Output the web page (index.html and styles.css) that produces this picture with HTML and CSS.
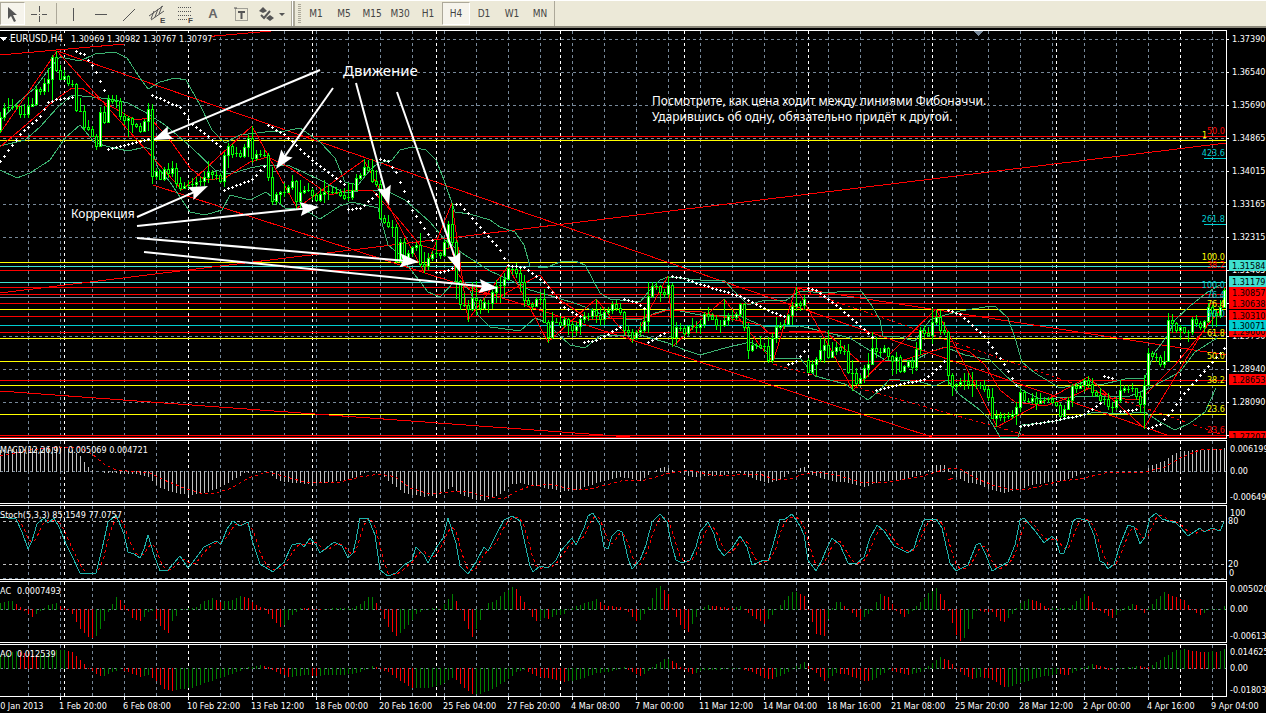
FILE: index.html
```
<!DOCTYPE html>
<html lang="ru">
<head>
    <meta charset="UTF-8">
    <meta name="viewport" content="width=device-width, initial-scale=1.0">
    <title>EURUSD,H4</title>
    <link rel="stylesheet" href="styles.css">
</head>
<body>
    <div class="toolbar">
        <button class="tool cursor active" aria-label="Cursor"><svg width="24" height="22"><path fill="#555" stroke="none" d="M7 4v12l3-3 3 6 2-1-3-6h4z"/></svg></button>
        <button class="tool" aria-label="Crosshair"><svg width="16" height="16"><path d="M8.500 0v6M8.500 10v6M0 8.500h6M11 8.500h5M8 8.500h1"/></svg></button>
        <span class="separator"></span>
        <button class="tool" aria-label="Vertical line"><svg width="16" height="16"><path d="M8.500 2v13"/></svg></button>
        <button class="tool" aria-label="Horizontal line"><svg width="16" height="16"><path d="M2 8.500h12"/></svg></button>
        <button class="tool" aria-label="Trend line"><svg width="16" height="16"><path d="M2 15L14 3"/></svg></button>
        <button class="tool" aria-label="Equidistant channel"><svg width="18" height="18"><path d="M1 11L15 1M3 15L16 6M3 14l3-8M7 12l3-8M11 9l3-8"/><text x="12" y="18">E</text></svg></button>
        <button class="tool" aria-label="Fibonacci retracement"><svg width="18" height="18"><path stroke-dasharray="1 1" d="M2 2.500h14M2 6.500h14M2 10.500h14M2 14.500h9"/><text x="12" y="18">F</text></svg></button>
        <button class="tool letter">A</button>
        <button class="tool" aria-label="Text label"><svg width="16" height="16"><path stroke-dasharray="1 1" d="M2.500 2.500h12v12h-12z"/><path d="M1 2h3"/><path stroke-width="2" d="M5 6h7M8.500 6v7"/></svg></button>
        <button class="tool arrows" aria-label="Arrows"><svg width="32" height="16"><path fill="#555" stroke="none" d="M2 5l4-4 4 4-4 2zM9 12l4 3 4-3-4-3zM22 7h6l-3 3z"/><path stroke-width="2" d="M4 9l3 3 6-7"/></svg></button>
        <span class="separator double"></span>
        <span class="grip"></span>
        <button class="period">M1</button>
        <button class="period">M5</button>
        <button class="period">M15</button>
        <button class="period">M30</button>
        <button class="period">H1</button>
        <button class="period active">H4</button>
        <button class="period">D1</button>
        <button class="period">W1</button>
        <button class="period">MN</button>
        <span class="separator"></span>
    </div>

    <main class="chart">
        <section class="panel" id="price"><svg class="plot" height="407"></svg><svg class="scale" height="407"></svg></section>
        <section class="panel" id="macd"><svg class="plot" height="62"></svg><svg class="scale" height="62"></svg></section>
        <section class="panel" id="stoch"><svg class="plot" height="73"></svg><svg class="scale" height="73"></svg></section>
        <section class="panel" id="ac"><svg class="plot" height="60"></svg><svg class="scale" height="60"></svg></section>
        <section class="panel" id="ao"><svg class="plot" height="51"></svg><svg class="scale" height="51"></svg></section>
        <svg class="time" height="16"></svg>
    </main>
    <script src="chart.js"></script>
</body>
</html>
```
FILE: styles.css
```
body {
    margin: 0;
    background: #000;
    font-family: "DejaVu Sans Condensed", "DejaVu Sans", sans-serif;
    font-size: 9px;
    overflow: hidden;
}

/* toolbar */
.toolbar {
    display: flex;
    align-items: center;
    height: 25px;
    background: #ece9d8;
    border-top: 1px solid #fff;
    border-bottom: 2px solid #8a877a;
    overflow: hidden;
}
.toolbar button {
    flex: none;
    display: flex;
    align-items: center;
    justify-content: center;
    box-sizing: border-box;
    width: 28px;
    height: 23px;
    margin: 0;
    padding: 0;
    border: 1px solid transparent;
    background: none;
    color: #444;
    font: 10px "DejaVu Sans Condensed", "DejaVu Sans", sans-serif;
}
.toolbar button.active {
    background: #f6f4ec;
    border-color: #aca899 #fff #fff #aca899;
}
.toolbar .cursor { width: 25px; }
.toolbar .arrows { width: 36px; }
.toolbar .letter {
    font: bold 13px "Liberation Sans", sans-serif;
    color: #666;
}
.tool svg {
    flex: none;
    fill: none;
    stroke: #555;
}
.tool text {
    font: bold 8px "Liberation Sans", sans-serif;
    fill: #444;
    stroke: none;
}
.separator {
    flex: none;
    width: 1px;
    height: 21px;
    margin: 0 2px 0 3px;
    background: #aca899;
}
.separator.double {
    width: 1px;
    height: 25px;
    margin: 0 4px 0 0;
    border-right: 1px solid #fff;
    box-shadow: 2px 0 #aca899;
}
.grip {
    flex: none;
    width: 3px;
    height: 19px;
    margin: 0 1px;
    background: repeating-linear-gradient(#aca899 0 1px, #ece9d8 1px 2px);
}
.period + .separator {
    height: 25px;
    margin: 0;
}

/* chart */
.chart {
    display: flex;
    flex-direction: column;
    padding-top: 2px;
}
.panel {
    display: flex;
    margin-bottom: 1px;
}
.plot {
    flex: 1;
    min-width: 0;
    border: 1px solid #fff;
    border-left: 0;
}
.scale {
    flex: none;
    width: 39px;
    margin-top: 1px;
}
.time {
    width: 100%;
    margin-top: -1px;
}
.chart svg {
    display: block;
    overflow: hidden;
    shape-rendering: crispEdges;
}
.chart text {
    fill: #fff;
    white-space: pre;
}
.chart path, .chart polyline {
    fill: none;
}
.chart .symbol { font-size: 10px; }
.chart .big { font: 15px "Noto Sans", sans-serif; }
.chart .mid { font: 12px "Noto Sans", sans-serif; }
```
FILE: chart.js
```
const NS = 'http://www.w3.org/2000/svg';
const SLATE = '#778899', RED = '#ff0000', YELLOW = '#ffff00', LIME = '#00ff00';
const TURQ = '#40e0d0', CYAN = '#00ced1', GREEN = '#3cb371', SILVER = '#c0c0c0';

function add(parent, tag, attrs, text) {
    const el = document.createElementNS(NS, tag);
    for (const name in attrs) el.setAttribute(name, attrs[name]);
    if (text !== undefined) el.textContent = text;
    parent.appendChild(el);
    return el;
}

function line(g, x1, y1, x2, y2, color, dash) {
    const dx = x1 === x2 ? 0.5 : 0, dy = y1 === y2 ? 0.5 : 0;
    return add(g, 'path', {
        d: `M${x1 + dx} ${y1 + dy}L${x2 + dx} ${y2 + dy}`,
        stroke: color, 'stroke-dasharray': dash || 'none'
    });
}

function curve(g, points, color, dash) {
    add(g, 'polyline', { points: points, stroke: color, 'stroke-dasharray': dash || 'none' });
}

function label(g, x, y, text, color, anchor) {
    return add(g, 'text', { x: x, y: y, style: `fill:${color || '#fff'}`, 'text-anchor': anchor || 'start' }, text);
}

// "x,y x,y ..." -> function giving y for any x
function knots(str) {
    const pts = str.trim().split(/\s+/).map(p => p.split(',').map(Number));
    return x => {
        for (let i = 1; i < pts.length; i++) {
            if (x <= pts[i][0]) {
                const a = pts[i - 1], b = pts[i];
                return a[1] + (b[1] - a[1]) * (x - a[0]) / (b[0] - a[0]);
            }
        }
        return pts[pts.length - 1][1];
    };
}

// y values are counted from the top of the window, each panel shifts them back
function panel(id, top, bottom) {
    const plot = add(document.querySelector(`#${id} .plot`), 'g', { transform: `translate(0 ${-top})` });
    const scale = add(document.querySelector(`#${id} .scale`), 'g', { transform: `translate(-1227 ${-top})` });
    for (let x = 28; x < 1226; x += 32) line(plot, x, top, x, bottom, SLATE, '3 3');
    for (let x = 64; x < 1226; x += 124) line(plot, x, top, x, bottom, '#fff', '3 3');
    return [plot, scale];
}

/* ---------- price ---------- */
// high, low, close
const bars = `112,133,117 103,121,108 98,112,107 99,110,107 103,110,106 107,118,114 104,118,114 97,118,106 98,107,104 86,106,89
87,95,91 78,95,83 68,92,79 55,100,57 51,72,70 65,80,79 70,78,76 75,86,83 80,87,84 83,112,110
98,112,111 105,131,127 120,131,129 126,137,136 134,150,146 107,146,112 106,124,122 95,123,99 95,104,101 95,108,101
98,120,116 113,125,120 116,137,118 117,133,124 123,128,126 123,133,131 119,132,121 103,131,109 104,184,176 168,180,171
170,180,179 167,181,169 163,178,173 161,177,168 163,188,183 177,191,188 182,188,186 180,189,185 178,187,184 177,187,182
177,186,181 171,186,177 161,183,172 170,180,174 171,180,175 173,183,181 152,187,155 143,168,146 144,158,154 147,157,153
150,158,156 144,158,147 135,157,138 126,163,158 150,161,154 150,157,154 150,157,155 153,181,177 167,205,201 192,205,194
191,204,192 183,197,192 185,193,187 175,190,181 180,209,201 180,208,192 186,194,190 183,192,190 188,200,195 193,202,200
188,202,194 180,203,192 185,200,191 187,194,192 187,194,192 189,197,195 188,200,198 183,201,197 183,200,190 174,191,178
173,180,175 159,176,167 160,172,170 159,183,181 170,187,184 180,220,218 215,224,222 215,228,226 220,237,227 224,263,261
239,263,242 238,260,257 250,260,253 246,257,247 242,251,245 233,267,264 252,273,266 253,270,258 251,261,254 240,258,253
252,259,255 240,257,242 221,248,224 203,246,242 240,299,281 280,310,304 293,307,305 300,322,309 282,311,298 281,315,300
299,314,308 298,310,302 300,313,303 290,309,292 280,303,286 277,303,285 273,297,279 265,281,268 267,275,269 263,278,273
269,292,282 275,307,300 297,306,304 302,310,306 297,307,299 292,305,299 289,323,322 320,343,337 312,339,321 318,323,322
316,326,325 317,328,319 318,335,324 321,337,330 322,336,326 315,335,319 312,323,316 313,321,316 308,320,310 299,323,315
307,326,319 308,325,312 307,315,310 301,314,304 300,311,308 303,315,312 311,335,330 325,336,332 329,343,338 330,340,332
322,336,330 310,333,321 282,333,296 282,298,286 282,290,286 285,302,292 289,298,294 276,298,285 283,347,337 322,345,327
323,331,328 325,337,333 325,336,326 318,330,326 321,333,327 320,334,324 312,328,314 307,321,316 313,320,319 315,330,325
320,333,325 299,327,320 313,326,316 310,321,317 312,320,314 303,317,304 303,331,327 323,359,350 340,352,345 343,349,345
336,349,347 343,352,346 337,363,360 333,363,338 317,343,327 322,330,325 320,329,324 314,325,315 302,325,306 287,311,303
301,311,305 295,310,299 358,373,372 360,373,364 357,377,359 338,362,350 338,363,345 330,359,357 342,358,351 342,355,347
340,354,350 345,355,351 344,374,372 360,391,373 368,385,383 375,383,378 365,383,368 353,377,364 332,365,348 337,358,351
348,357,352 345,353,348 347,360,356 355,375,361 352,374,357 355,373,371 365,373,366 360,368,361 357,374,367 342,371,349
327,355,330 325,338,333 327,337,335 308,344,322 310,325,317 310,335,330 322,335,332 331,385,375 373,396,386 383,390,384
378,387,382 373,390,381 373,389,384 372,397,384 380,389,385 382,389,385 380,392,389 387,401,397 388,419,418 410,427,415
412,421,417 413,422,417 412,419,416 410,419,414 402,425,407 389,412,392 390,402,400 398,403,401 393,404,398 392,410,403
393,402,400 397,404,400 397,403,399 397,404,402 402,407,405 403,419,416 405,418,409 397,410,400 384,407,386 383,393,388
382,388,385 378,392,380 376,388,384 378,397,392 390,397,395 388,402,400 397,405,399 393,410,406 402,413,407 398,410,400
380,403,390 385,393,388 385,393,389 383,392,388 388,400,396 392,413,404 375,429,385 348,387,353 351,358,356 353,362,357
355,367,364 351,368,361 313,362,320 314,333,323 322,333,330 325,340,327 327,334,332 330,342,332 317,335,319 315,327,323
321,330,327 320,332,321 303,323,307 305,327,313 310,327,315 300,318,307 288,307,290`.split(/\s+/).map(b => b.split(',').map(Number));
const GAP = 202;    // weekend gap, opens away from the last close

const [price, priceScale] = panel('price', 31, 438);
for (let y = 39; y < 438; y += 33) line(price, 3, y, 1226, y, SLATE, '3 3');

[[136, RED], [140, YELLOW], [262, YELLOW], [266, TURQ], [270, RED], [282, TURQ], [287, RED], [294, RED],
 [297, SLATE], [303, RED], [309, YELLOW], [316, RED], [325, CYAN], [332, RED], [338, YELLOW], [361, YELLOW],
 [380, RED], [385, YELLOW], [414, YELLOW], [435, RED], [437, RED]].forEach(l => line(price, 0, l[0], 1226, l[0], l[1]));

// trend lines and channels
line(price, 0, 55, 271, 31, RED);
line(price, 0, 293, 1226, 143, RED);
line(price, 57, 51, 1170, 436, RED);
line(price, 153, 185, 932, 437, RED);
line(price, 0, 391, 630, 437, RED);
line(price, 796, 288, 1226, 355, RED);
line(price, 796, 288, 1226, 436, RED, '4 3 2 3');
line(price, 773, 364, 1029, 436, RED, '4 3 2 3');

// bollinger bands
curve(price, '0,121 15,105 35,88 50,68 60,57 80,61 95,54 115,52 127,58 140,78 148,89 160,82 175,78 186,80 200,105 212,130 225,143 240,135 265,132 285,131 300,128 320,142 335,158 345,182 358,185 370,170 378,163 392,160 400,150 412,147 426,150 436,160 444,180 455,212 470,214 490,220 500,227 515,232 524,245 530,266 545,268 560,262 575,261 585,265 600,293 610,299 640,302 650,290 660,280 668,277 700,280 725,281 735,292 748,305 765,300 785,301 800,291 825,293 850,291 862,292 872,306 880,320 883,336 900,337 915,341 930,320 945,315 960,311 985,307 995,306 1008,318 1015,338 1022,362 1035,373 1060,388 1075,385 1088,381 1100,385 1125,379 1145,378 1155,352 1168,335 1175,320 1190,306 1205,294 1220,285', GREEN);
curve(price, '0,146 25,140 40,127 57,108 72,95 92,97 110,99 128,103 145,112 165,125 190,146 215,170 230,174 250,168 265,165 290,166 320,180 345,193 365,190 385,190 405,200 430,222 445,240 465,255 490,271 510,280 530,290 555,297 580,305 610,318 640,320 655,313 670,309 700,315 740,316 765,327 800,326 850,338 885,360 915,360 930,352 945,347 965,355 990,360 1005,375 1022,390 1040,399 1075,397 1100,396 1130,396 1150,388 1180,372 1195,352 1217,338', GREEN);
curve(price, '0,170 17,178 30,173 50,160 65,138 80,125 95,143 110,147 128,151 145,147 152,150 158,168 170,182 190,212 205,215 222,210 230,195 250,200 266,192 285,208 305,210 320,219 340,206 352,202 378,208 388,245 400,255 415,275 428,292 440,297 455,281 470,290 478,315 490,327 520,331 535,318 545,322 570,345 585,348 600,336 640,335 668,343 685,350 700,355 725,348 750,342 765,350 773,358 800,358 815,376 845,384 868,400 880,390 890,379 920,382 935,386 947,380 960,395 980,410 990,420 1000,437 1018,437 1022,425 1050,422 1075,417 1095,412 1120,414 1145,412 1160,422 1175,430 1190,423 1205,412 1216,388', GREEN);

// zigzag and moving average
curve(price, '0,133 57,51 182,190 252,126 297,208 364,160 424,272 452,203 468,320 508,266 548,342 596,299 632,342 668,276 673,346 724,299 773,362 796,287 853,390 936,309 997,427 1088,377 1144,428 1210,320', RED);
curve(price, '0,147 27,124 55,100 72,88 82,88 100,100 135,120 150,118 170,140 190,168 205,180 225,178 250,162 268,157 290,168 330,195 350,190 372,190 395,215 420,245 440,251 452,247 455,270 470,290 500,297 515,288 540,275 560,300 590,320 620,318 640,319 668,310 702,312 735,320 760,325 770,334 798,331 825,331 840,345 860,362 900,361 930,352 950,346 970,352 985,365 1000,390 1015,402 1045,406 1070,397 1090,388 1110,398 1140,400 1155,385 1175,365 1200,335 1224,305', RED);

bars.forEach((b, k) => {
    const x = k * 4, close = b[2];
    const open = k === 0 ? 130 : k === GAP ? 360 : bars[k - 1][2];
    const up = close < open;
    line(price, x, b[0], x, b[1], LIME);
    if (Math.abs(close - open) < 2) {
        line(price, x - 1, close, x + 2, close, LIME);
    } else {
        add(price, 'rect', {
            x: x - 0.5, y: Math.min(open, close) + 0.5, width: 2, height: Math.abs(close - open),
            fill: up ? '#fff' : '#000', stroke: LIME
        });
    }
});

// parabolic sar
['0,161 12,145 20,134 40,116 48,102 56,99 72,97', '76,51 84,54 92,65 96,72 104,90', '108,149 148,139',
 '152,95 180,107 190,122 220,146', '224,190 252,179 264,166', '268,125 284,134 312,160 344,184',
 '348,209 360,208 376,194', '380,159 388,161 396,172 412,210 432,240', '436,272 444,271 452,268',
 '456,204 460,204 472,218 500,250 508,265 524,267 544,282 564,307 580,316', '584,342 596,340 620,327',
 '624,299 636,302 644,308', '648,342 664,333', '672,276 684,278 700,284 740,296 772,312 784,316',
 '788,364 796,361 804,351', '808,288 816,290 840,308 864,329 872,337', '876,390 900,384 924,379 940,366 944,361',
 '948,310 960,314 984,336 1004,364 1016,385', '1020,426 1056,420 1084,414 1100,403', '1104,376 1112,378',
 '1120,411 1136,409', '1148,428 1160,424 1172,410 1184,393 1212,362 1224,348'].forEach(s => {
    const p = s.split(' '), f = knots(s);
    for (let x = parseInt(p[0]); x <= parseInt(p[p.length - 1]); x += 4) {
        const y = Math.round(f(x));
        line(price, x - 1, y, x + 2, y, '#fff');
        line(price, x, y - 1, x, y + 2, '#fff');
    }
});

// fibonacci levels
[[134, '50.0', RED], [156, '423.6', CYAN], [222, '261.8', CYAN], [260, '100.0', YELLOW], [268, '38.2', RED],
 [288, '100.0', CYAN], [298, '76.4', CYAN], [307, '76.4', YELLOW], [317, '50.0', CYAN], [336, '61.8', YELLOW],
 [359, '50.0', YELLOW], [383, '38.2', YELLOW], [412, '23.6', YELLOW], [433, '23.6', RED]
].forEach(l => label(price, 1225, l[0], l[1], l[2], 'end'));
line(price, 1204, 158, 1226, 158, CYAN);
line(price, 1204, 224, 1226, 224, CYAN);
label(price, 1202, 138, '1', YELLOW);

// arrows
[[320, 70, 153, 140], [333, 88, 276, 169], [356, 83, 389, 205], [397, 92, 460, 272],
 [137, 217, 208, 186], [137, 226, 319, 207], [137, 238, 419, 262], [144, 252, 498, 288]].forEach(a => {
    const deg = Math.atan2(a[3] - a[1], a[2] - a[0]) * 180 / Math.PI;
    const len = Math.hypot(a[2] - a[0], a[3] - a[1]);
    const g = add(price, 'g', { transform: `translate(${a[2]} ${a[3]}) rotate(${deg})`, 'shape-rendering': 'geometricPrecision' });
    add(g, 'path', { d: `M${-len} 0H-12`, stroke: '#fff', 'stroke-width': 2 });
    add(g, 'polygon', { points: '0,0 -19,-7 -16,0 -19,7', fill: '#fff' });
});
label(price, 343, 76, 'Движение').setAttribute('class', 'big');
label(price, 71, 218, 'Коррекция').setAttribute('class', 'mid');
label(price, 652, 105, 'Посмотрите, как цена ходит между линиями Фибоначчи.').setAttribute('class', 'mid');
label(price, 652, 121, 'Ударившись об одну, обязательно придёт к другой.').setAttribute('class', 'mid');

add(price, 'rect', { x: 10, y: 33, width: 202, height: 11, fill: '#000' });
add(price, 'polygon', { points: '0,37 7,37 3,41', fill: '#fff' });
add(price, 'polygon', { points: '973,31 984,31 978,36', fill: SLATE });
label(price, 10, 42, 'EURUSD,H4').setAttribute('class', 'symbol');
['1.30969', '1.30982', '1.30767', '1.30797'].forEach((t, i) => label(price, 71 + i * 36, 42, t));

[[39, '1.37390'], [72, '1.36540'], [105, '1.35690'], [138, '1.34865'], [171, '1.34015'], [204, '1.33165'],
 [237, '1.32315'], [270, '1.31465'], [303, ''], [336, '1.29790'], [369, '1.28940'], [402, '1.28090'], [435, '']].forEach(l => {
    line(priceScale, 1227, l[0], 1229, l[0], '#fff');
    label(priceScale, 1232, l[0] + 3, l[1]);
});
[[265, '1.31584', TURQ], [281, '1.31179', TURQ], [292, '1.30857', RED], [303, '1.30638', RED], [315, '1.30310', RED],
 [331, '1.29600', RED], [325, '1.30071', CYAN], [379, '1.28653', RED], [436, '1.27207', RED]].forEach(l => {
    add(priceScale, 'rect', { x: 1229, y: l[0] - 5, width: 40, height: 11, fill: l[2] });
    label(priceScale, 1232, l[0] + 4, l[1], '#000');
});

/* ---------- macd ---------- */
const [macd, macdScale] = panel('macd', 441, 503);
line(macd, 0, 471, 1226, 471, SLATE, '3 3');
const hist = knots('0,450 16,449 32,448 60,447 72,450 80,456 88,467 92,470 104,472 136,473 148,476 152,480 160,487 176,492 188,494 204,492 220,486 236,477 244,472 268,471 276,478 284,481 310,483 340,480 355,476 365,471 380,472 390,482 404,492 424,496 440,493 452,486 460,493 472,498 484,500 500,493 512,483 520,482 536,485 560,490 576,489 600,481 620,476 632,478 640,480 648,474 652,471 664,467 676,471 690,476 710,475 740,472 756,479 768,482 780,479 790,472 804,467 812,474 830,480 850,482 864,486 880,480 900,479 920,474 932,468 936,465 944,465 950,471 956,476 965,481 980,484 990,489 1005,492 1020,488 1032,484 1050,481 1070,478 1082,472 1100,471 1145,471 1152,465 1164,461 1172,455 1180,451 1200,450 1220,449 1224,448');
for (let x = 0; x < 1226; x += 4) {
    const y = Math.round(hist(x));
    if (y !== 471) line(macd, x, Math.min(y, 471), x, Math.max(y, 471) + 1, SILVER);
}
curve(macd, '0,456 16,453 30,450 60,447 80,448 92,454 104,464 116,470 150,473 164,480 184,488 200,493 216,493 232,488 248,478 268,472 290,478 305,482 340,482 360,477 380,474 396,477 410,488 430,494 450,492 465,491 480,495 495,498 505,498 515,492 530,486 550,484 570,489 590,489 610,484 625,480 645,480 670,473 690,470 715,476 760,474 775,480 790,479 804,474 820,472 840,476 860,482 880,483 900,480 920,477 936,472 950,468 960,469 975,478 995,486 1010,489 1025,490 1045,485 1060,481 1080,479 1105,473 1120,472 1145,472 1165,467 1180,458 1200,450 1224,449', RED, '3 3');
curve(macd, '948,480 953,478', RED);
label(macd, 0, 453, 'MACD(12,26,9)');
label(macd, 68, 453, '0.005069 0.004721');
label(macdScale, 1230, 452, '0.006199');
label(macdScale, 1230, 474, '0.00');
label(macdScale, 1230, 500, '-0.00649');

/* ---------- stochastic ---------- */
const [stoch, stochScale] = panel('stoch', 506, 579);
line(stoch, 3, 521, 1226, 521, SILVER, '3 3');
line(stoch, 3, 564, 1226, 564, SILVER, '3 3');
line(stoch, 3, 578, 1226, 578, SLATE, '3 3');
const k5 = '0,517 16,519 22,532 28,549 32,541 37,524 44,518 48,523 54,518 60,529 66,544 72,556 80,573 96,573 102,549 108,522 116,515 124,534 128,552 134,554 140,558 144,549 148,535 154,555 160,571 168,570 180,556 188,568 196,558 204,547 216,541 221,544 227,529 233,521 240,526 248,522 252,540 260,564 273,572 284,562 292,545 300,543 304,547 310,538 316,545 320,553 334,542 342,546 348,558 353,553 356,540 360,518 368,518 375,535 380,570 388,576 396,573 404,565 412,560 416,547 424,555 428,563 436,548 443,538 448,518 456,543 460,566 468,574 476,562 484,547 488,551 496,535 504,520 512,516 520,521 526,548 530,566 533,572 540,566 548,568 556,560 560,552 572,538 576,545 584,528 588,516 593,513 600,525 604,547 608,549 612,536 618,530 622,532 628,558 632,569 640,560 646,545 652,522 660,514 667,522 671,542 676,560 682,563 690,560 696,547 700,532 708,522 714,534 718,548 724,556 732,548 740,536 747,547 752,565 764,560 768,561 773,545 780,519 784,520 792,514 800,526 804,535 808,560 816,571 822,560 826,550 832,538 840,545 848,563 856,564 864,557 870,538 877,525 884,531 894,546 908,553 914,548 919,532 924,520 936,519 942,528 947,550 950,563 956,571 968,565 976,545 980,543 986,555 992,571 1008,562 1015,545 1020,520 1024,518 1036,532 1044,543 1052,536 1056,540 1060,553 1064,553 1068,542 1073,521 1078,518 1088,521 1094,535 1100,561 1104,563 1108,569 1114,564 1120,545 1128,525 1134,527 1140,544 1145,537 1150,518 1156,513 1162,519 1176,523 1180,527 1188,536 1200,528 1204,532 1212,528 1220,531 1224,522';
const main = knots(k5);
let signal = '';
for (let x = 0; x < 1226; x += 4) {
    const y = (main(x) + main(Math.max(x - 4, 0)) + main(Math.max(x - 8, 0))) / 3;
    signal += `${x},${y.toFixed(1)} `;
}
curve(stoch, signal.trim(), RED, '3 3');
curve(stoch, k5, '#20b2aa');
label(stoch, 0, 518, 'Stoch(5,3,3) 85.1549 77.0757');
label(stochScale, 1230, 516, '100');
label(stochScale, 1228, 524, '80');
label(stochScale, 1228, 567, '20');
label(stochScale, 1229, 576, '0');

/* ---------- ac / ao ---------- */
function oscillator(g, zero, values) {
    const f = knots(values);
    line(g, 0, zero, 1226, zero, SLATE, '3 3');
    for (let x = 0; x < 1226; x += 4) {
        const y = Math.round(f(x));
        const up = f(x) <= f(Math.max(x - 4, 0));
        line(g, x, Math.min(y, zero), x, Math.max(y, zero) + 1, up ? '#008000' : RED);
    }
}

const [ac, acScale] = panel('ac', 582, 642);
oscillator(ac, 609, '0,603 8,601 12,601 20,607 28,613 32,616 36,613 40,610 48,605 56,603 60,606 68,609 72,613 80,628 88,636 92,637 96,635 104,620 108,611 112,604 116,597 120,600 124,605 128,610 132,617 140,620 148,611 152,610 160,625 168,632 172,620 180,609 188,608 196,607 204,601 212,598 220,602 232,600 240,596 248,598 256,605 264,608 272,618 280,626 284,624 292,614 300,608 320,609 340,608 352,608 360,604 368,597 372,597 380,609 388,626 396,635 400,632 408,624 416,613 424,609 436,608 440,609 444,604 452,594 456,601 460,609 464,620 472,636 476,628 484,609 488,603 496,600 504,592 512,587 516,589 524,602 532,616 536,620 544,617 548,618 556,614 564,613 568,609 588,602 596,599 604,605 612,606 620,607 628,611 636,620 640,619 648,607 656,588 660,586 668,594 672,608 680,624 688,631 692,623 700,609 708,605 720,607 732,608 740,606 752,615 764,623 768,618 776,609 784,600 792,592 796,592 804,596 808,609 816,633 824,635 828,618 832,608 836,602 840,602 848,609 860,619 872,610 880,594 888,597 896,610 904,616 912,610 920,602 928,593 936,588 944,600 948,610 956,634 960,640 964,637 972,618 976,610 992,611 1000,620 1004,621 1012,613 1020,603 1028,599 1036,601 1048,608 1060,608 1068,608 1076,601 1084,594 1088,596 1096,608 1104,612 1112,617 1120,610 1132,604 1136,605 1144,612 1148,608 1156,599 1164,592 1172,596 1184,600 1192,609 1200,614 1208,609 1220,609 1224,606');
label(ac, 0, 594, 'AC');
label(ac, 17, 594, '0.0007493');
label(acScale, 1230, 592, '0.005020');
label(acScale, 1230, 612, '0.00');
label(acScale, 1230, 639, '-0.00613');

const [ao, aoScale] = panel('ao', 645, 696);
oscillator(ao, 668, '0,655 8,653 16,651 20,652 36,655 40,654 48,652 56,650 64,650 72,652 80,660 88,668 92,670 100,675 104,675 112,671 120,668 128,671 140,676 148,674 156,680 164,688 172,690 180,688 192,687 204,682 220,677 232,673 244,668 260,665 268,667 276,671 288,676 308,674 316,675 328,674 340,674 352,673 360,671 372,666 380,668 388,671 400,680 412,687 428,687 440,684 452,677 456,679 464,687 472,693 480,693 496,686 508,678 516,671 524,669 536,675 556,679 564,681 580,678 596,672 612,670 624,667 632,671 640,675 648,670 656,664 664,659 668,659 676,663 680,667 692,673 704,669 740,668 752,671 764,677 772,678 784,673 796,666 804,662 808,666 816,672 824,680 828,677 836,672 848,674 860,679 868,680 876,677 888,669 896,671 908,674 920,671 928,666 936,660 940,657 948,660 956,668 964,674 972,678 980,676 988,677 996,681 1004,686 1008,686 1020,682 1036,677 1056,673 1068,674 1076,670 1084,667 1092,664 1104,667 1108,669 1120,668 1136,666 1148,667 1156,662 1164,657 1176,650 1184,649 1192,651 1204,652 1212,651 1216,652 1224,649');
label(ao, 0, 657, 'AO');
label(ao, 17, 657, '0.012539');
label(aoScale, 1230, 655, '0.014625');
label(aoScale, 1230, 671, '0.00');
label(aoScale, 1230, 693, '-0.01803');

/* ---------- time axis ---------- */
const time = document.querySelector('.time');
['30 Jan 2013', '1 Feb 20:00', '6 Feb 08:00', '10 Feb 22:00', '13 Feb 12:00', '18 Feb 00:00', '20 Feb 16:00',
 '25 Feb 04:00', '27 Feb 20:00', '4 Mar 08:00', '7 Mar 00:00', '11 Mar 12:00', '14 Mar 04:00', '18 Mar 16:00',
 '21 Mar 08:00', '25 Mar 20:00', '28 Mar 12:00', '2 Apr 00:00', '4 Apr 16:00', '9 Apr 04:00'].forEach((t, i) => {
    line(time, i * 64 - 4, 0, i * 64 - 4, 3, '#fff');
    label(time, i * 64 - 5, 12, t);
});
```
